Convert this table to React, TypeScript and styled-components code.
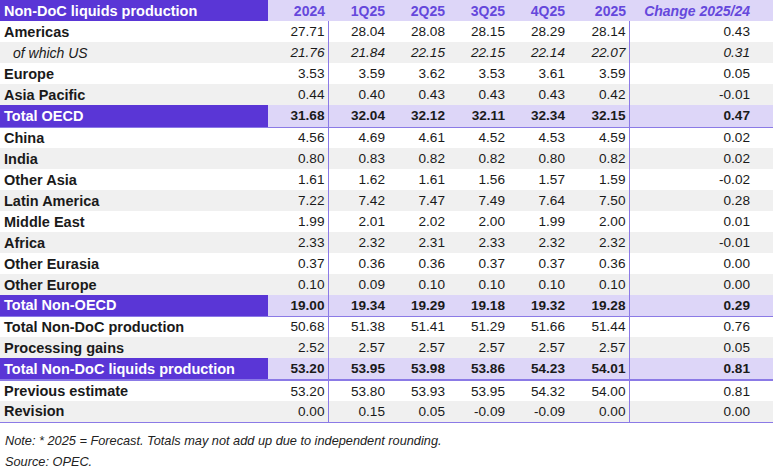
import styled, { createGlobalStyle, css } from 'styled-components';

const GlobalStyle = createGlobalStyle`
  html, body {
    margin: 0;
    padding: 0;
    background: #ffffff;
  }
  body {
    font-family: "Liberation Sans", Arial, sans-serif;
    color: #1a1a1a;
  }
`;

const DARK = '#5a36d6';
const LIGHT = '#ddd6f8';
const LINE = '#8b7ae6';
const STRIPE = '#f0f0f0';

type Kind = 'plain' | 'sub' | 'total' | 'grand';

interface RowData {
  label: string;
  values: string[];
  kind: Kind;
  striped?: boolean;
  tall?: boolean;
}

const rows: RowData[] = [
  { label: 'Americas', values: ['27.71', '28.04', '28.08', '28.15', '28.29', '28.14', '0.43'], kind: 'plain' },
  { label: 'of which US', values: ['21.76', '21.84', '22.15', '22.15', '22.14', '22.07', '0.31'], kind: 'sub', striped: true },
  { label: 'Europe', values: ['3.53', '3.59', '3.62', '3.53', '3.61', '3.59', '0.05'], kind: 'plain' },
  { label: 'Asia Pacific', values: ['0.44', '0.40', '0.43', '0.43', '0.43', '0.42', '-0.01'], kind: 'plain', striped: true },
  { label: 'Total OECD', values: ['31.68', '32.04', '32.12', '32.11', '32.34', '32.15', '0.47'], kind: 'total', tall: true },
  { label: 'China', values: ['4.56', '4.69', '4.61', '4.52', '4.53', '4.59', '0.02'], kind: 'plain' },
  { label: 'India', values: ['0.80', '0.83', '0.82', '0.82', '0.80', '0.82', '0.02'], kind: 'plain', striped: true },
  { label: 'Other Asia', values: ['1.61', '1.62', '1.61', '1.56', '1.57', '1.59', '-0.02'], kind: 'plain' },
  { label: 'Latin America', values: ['7.22', '7.42', '7.47', '7.49', '7.64', '7.50', '0.28'], kind: 'plain', striped: true },
  { label: 'Middle East', values: ['1.99', '2.01', '2.02', '2.00', '1.99', '2.00', '0.01'], kind: 'plain' },
  { label: 'Africa', values: ['2.33', '2.32', '2.31', '2.33', '2.32', '2.32', '-0.01'], kind: 'plain', striped: true },
  { label: 'Other Eurasia', values: ['0.37', '0.36', '0.36', '0.37', '0.37', '0.36', '0.00'], kind: 'plain' },
  { label: 'Other Europe', values: ['0.10', '0.09', '0.10', '0.10', '0.10', '0.10', '0.00'], kind: 'plain', striped: true },
  { label: 'Total Non-OECD', values: ['19.00', '19.34', '19.29', '19.18', '19.32', '19.28', '0.29'], kind: 'total' },
  { label: 'Total Non-DoC production', values: ['50.68', '51.38', '51.41', '51.29', '51.66', '51.44', '0.76'], kind: 'plain' },
  { label: 'Processing gains', values: ['2.52', '2.57', '2.57', '2.57', '2.57', '2.57', '0.05'], kind: 'plain', striped: true },
  { label: 'Total Non-DoC liquids production', values: ['53.20', '53.95', '53.98', '53.86', '54.23', '54.01', '0.81'], kind: 'grand', tall: true },
  { label: 'Previous estimate', values: ['53.20', '53.80', '53.93', '53.95', '54.32', '54.00', '0.81'], kind: 'plain' },
  { label: 'Revision', values: ['0.00', '0.15', '0.05', '-0.09', '-0.09', '0.00', '0.00'], kind: 'plain', striped: true },
];

const headers = ['2024', '1Q25', '2Q25', '3Q25', '4Q25', '2025'];
const widths = [268, 60, 60, 60, 60, 60, 61, 144];

const Page = styled.div`
  width: 776px;
  height: 468px;
  overflow: hidden;
`;

const Table = styled.table`
  width: 773px;
  table-layout: fixed;
  border-collapse: collapse;
  border-spacing: 0;
  border-bottom: 1px solid ${LINE};
`;

const HeadRow = styled.tr`
  height: 21px;
`;

const TitleCell = styled.th`
  background: ${DARK};
  color: #ffffff;
  font-size: 14.5px;
  font-weight: 700;
  text-align: left;
  padding: 0 0 0 4px;
  white-space: nowrap;
`;

const YearCell = styled.th<{ $change?: boolean }>`
  background: ${LIGHT};
  color: #6548dc;
  font-size: 14px;
  font-style: ${(p) => (p.$change ? 'italic' : 'normal')};
  font-weight: 700;
  text-align: right;
  padding: 0 ${(p) => (p.$change ? '23px' : '3px')} 0 0;
  white-space: nowrap;
`;

const Row = styled.tr<{ $kind: Kind; $striped?: boolean; $tall?: boolean }>`
  height: ${(p) => (p.$tall ? '22px' : '21px')};
  background: ${(p) => (p.$striped ? STRIPE : '#ffffff')};
  ${(p) =>
    (p.$kind === 'total' || p.$kind === 'grand') &&
    css`
      background: ${LIGHT};
      font-weight: 700;
      border-bottom: ${p.$kind === 'grand' ? 2 : 1}px solid ${LINE};
    `}
`;

const Label = styled.td<{ $kind: Kind }>`
  font-size: 14.5px;
  font-weight: 700;
  padding: 0 0 0 4px;
  white-space: nowrap;
  ${(p) =>
    p.$kind === 'sub' &&
    css`
      font-size: 14px;
      font-weight: 400;
      font-style: italic;
      padding-left: 13px;
    `}
  ${(p) =>
    (p.$kind === 'total' || p.$kind === 'grand') &&
    css`
      background: ${DARK};
      color: #ffffff;
    `}
`;

const Value = styled.td<{ $kind: Kind; $divider?: boolean; $change?: boolean }>`
  font-size: 13.6px;
  text-align: right;
  padding: 0 ${(p) => (p.$change ? '23px' : '3px')} 0 0;
  font-style: ${(p) => (p.$kind === 'sub' ? 'italic' : 'normal')};
  border-right: ${(p) => (p.$divider ? `1px solid ${LINE}` : 'none')};
  white-space: nowrap;
`;

const Notes = styled.div`
  padding: 7px 0 0 5px;
  font-size: 12.75px;
  font-style: italic;
  line-height: 21px;
  color: #222222;
`;

const App = () => {
  return (
    <Page>
      <GlobalStyle />
      <Table>
        <colgroup>
          {widths.map((w, i) => (
            <col key={i} style={{ width: w }} />
          ))}
        </colgroup>
        <thead>
          <HeadRow>
            <TitleCell>Non-DoC liquids production</TitleCell>
            {headers.map((h) => (
              <YearCell key={h}>{h}</YearCell>
            ))}
            <YearCell $change>Change 2025/24</YearCell>
          </HeadRow>
        </thead>
        <tbody>
          {rows.map((r) => (
            <Row key={r.label} $kind={r.kind} $striped={r.striped} $tall={r.tall}>
              <Label $kind={r.kind}>{r.label}</Label>
              {r.values.map((v, i) => (
                <Value
                  key={i}
                  $kind={r.kind}
                  $divider={i === 0 || i === 5}
                  $change={i === 6}
                >
                  {v}
                </Value>
              ))}
            </Row>
          ))}
        </tbody>
      </Table>
      <Notes>
        <div>Note: * 2025 = Forecast. Totals may not add up due to independent rounding.</div>
        <div>Source: OPEC.</div>
      </Notes>
    </Page>
  );
};

export default App;
